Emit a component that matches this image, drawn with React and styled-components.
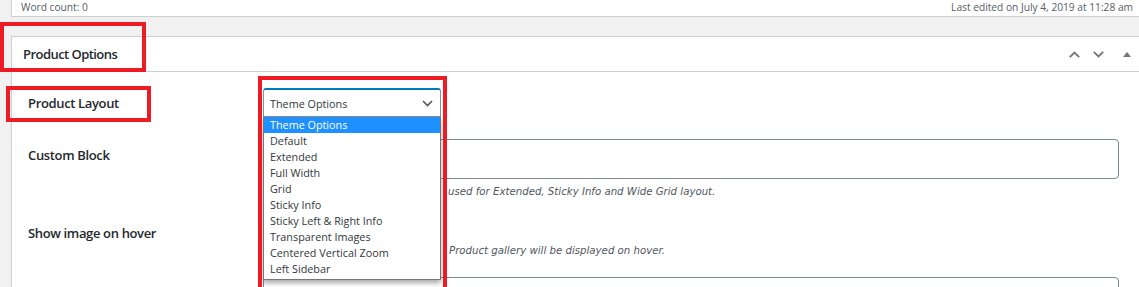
import React from "react"
import styled, { createGlobalStyle } from "styled-components"

const GlobalStyle = createGlobalStyle`
  html, body {
    margin: 0;
    padding: 0;
    background: #f1f1f1;
    overflow: hidden;
  }
  body {
    font-family: "Open Sans", "Noto Sans", sans-serif;
    color: #23282d;
  }
`

const Page = styled.div`
  position: relative;
  width: 1139px;
  height: 287px;
  padding-left: 11px;
  box-sizing: border-box;
  overflow: hidden;
`

const StatusBar = styled.div`
  height: 17px;
  background: #fff;
  border-left: 1px solid #ccd0d4;
  border-bottom: 1px solid #ccd0d4;
  box-sizing: border-box;
  display: flex;
  align-items: center;
  justify-content: space-between;
  padding: 0 6px 2px 9px;
  font-size: 10.2px;
  color: #555d66;
`

const Postbox = styled.div`
  margin-top: 19px;
  background: #fff;
  border: 1px solid #ccd0d4;
  border-right: none;
  height: 260px;
`

const Header = styled.div`
  height: 34px;
  border-bottom: 1px solid #ccd0d4;
  display: flex;
  align-items: center;
  padding-left: 11px;
  padding-right: 8px;
`

const Title = styled.h2`
  margin: 0;
  flex: 1;
  font-size: 13px;
  font-weight: 600;
  letter-spacing: -0.55px;
  color: #23282d;
`

const HeaderButtons = styled.div`
  display: flex;
  align-items: center;
  gap: 13px;
  color: #72777c;
`

const Toggle = styled.span`
  display: flex;
  margin-left: 6px;
`

const Body = styled.div`
  padding: 16px 20px 0 16px;
`

const Row = styled.div`
  display: grid;
  grid-template-columns: 235px 1fr;
  margin-bottom: ${p => p.$gap || 22}px;
  position: relative;
`

const Label = styled.div`
  padding-top: ${p => p.$top || 6}px;
  line-height: 20px;
  font-size: 13px;
  font-weight: 600;
  letter-spacing: -0.35px;
  color: #23282d;
`

const Field = styled.div`
  position: relative;
`

const SelectBox = styled.div`
  width: 178px;
  height: 29px;
  box-sizing: border-box;
  border: 1px solid #8c8f94;
  border-top: 2px solid #007cba;
  border-radius: 3px 3px 0 0;
  display: flex;
  align-items: center;
  justify-content: space-between;
  padding: 0 7px 0 6px;
  font-size: 10.8px;
  color: #32373c;
  background: #fff;
`

const Dropdown = styled.ul`
  position: absolute;
  top: 29px;
  left: 0;
  width: 178px;
  box-sizing: border-box;
  margin: 0;
  padding: 0 0 2px;
  list-style: none;
  background: #fff;
  border: 1px solid #767676;
  border-top: none;
  box-shadow: 0 3px 5px rgba(0, 0, 0, 0.35);
  z-index: 5;
`

const Option = styled.li`
  height: 16px;
  line-height: 16px;
  padding-left: 6px;
  font-size: 10.8px;
  color: ${p => (p.$active ? "#fff" : "#32373c")};
  background: ${p => (p.$active ? "#1e90ff" : "transparent")};
  white-space: nowrap;
`

const TextArea = styled.div`
  height: 40px;
  box-sizing: border-box;
  border: 1px solid #7e8993;
  border-radius: 4px;
`

/* the start of each description sits under the open dropdown, only its visible end is shown */
const Description = styled.p`
  margin: ${p => p.$top}px 0 0 ${p => p.$indent || 0}px;
  font-family: "DejaVu Sans", Verdana, sans-serif;
  font-style: italic;
  font-size: 10.2px;
  line-height: 12px;
  color: #50575e;
  white-space: nowrap;
`

const CheckLine = styled.div`
  height: 26px;
`

const Chevron = ({ up }) => (
  <svg width="11" height="7" viewBox="0 0 11 7">
    <polyline
      points={up ? "0.8,6.2 5.5,1.5 10.2,6.2" : "0.8,0.8 5.5,5.5 10.2,0.8"}
      fill="none"
      stroke="currentColor"
      strokeWidth="1.8"
    />
  </svg>
)

const Triangle = () => (
  <svg width="8" height="5" viewBox="0 0 8 5">
    <polygon points="0,5 4,0 8,5" fill="currentColor" />
  </svg>
)

const Annotation = styled.div`
  position: absolute;
  left: ${p => p.$x}px;
  top: ${p => p.$y}px;
  width: ${p => p.$w}px;
  height: ${p => p.$h}px;
  border: 4px solid #ed1c24;
  box-sizing: border-box;
  pointer-events: none;
  z-index: 10;
`

const options = [
  "Theme Options",
  "Default",
  "Extended",
  "Full Width",
  "Grid",
  "Sticky Info",
  "Sticky Left & Right Info",
  "Transparent Images",
  "Centered Vertical Zoom",
  "Left Sidebar",
]

export default function App() {
  return (
    <>
      <GlobalStyle />
      <Page>
        <StatusBar>
          <span>Word count: 0</span>
          <span>Last edited on July 4, 2019 at 11:28 am</span>
        </StatusBar>
        <Postbox>
          <Header>
            <Title>Product Options</Title>
            <HeaderButtons>
              <Chevron up />
              <Chevron />
              <Toggle><Triangle /></Toggle>
            </HeaderButtons>
          </Header>
          <Body>
            <Row>
              <Label $top={5}>Product Layout</Label>
              <Field>
                <SelectBox>
                  <span>Theme Options</span>
                  <svg width="11" height="7" viewBox="0 0 11 7">
                    <polyline points="1,1 5.5,5.5 10,1" fill="none" stroke="#50575e" strokeWidth="1.6" />
                  </svg>
                </SelectBox>
                <Dropdown>
                  {options.map((o, i) => (
                    <Option key={o} $active={i === 0}>{o}</Option>
                  ))}
                </Dropdown>
              </Field>
            </Row>
            <Row $gap={19}>
              <Label>Custom Block</Label>
              <Field>
                <TextArea />
                <Description $top={7} $indent={185}>
                  used for Extended, Sticky Info and Wide Grid layout.
                </Description>
              </Field>
            </Row>
            <Row $gap={20}>
              <Label>Show image on hover</Label>
              <Field>
                <CheckLine />
                <Description $top={2} $indent={186}>
                  Product gallery will be displayed on hover.
                </Description>
              </Field>
            </Row>
            <Row>
              <Label />
              <Field>
                <TextArea />
              </Field>
            </Row>
          </Body>
        </Postbox>
        <Annotation $x={0} $y={22} $w={146} $h={50} />
        <Annotation $x={6} $y={86} $w={145} $h={36} />
        <Annotation $x={258} $y={76} $w={189} $h={215} />
      </Page>
    </>
  )
}
